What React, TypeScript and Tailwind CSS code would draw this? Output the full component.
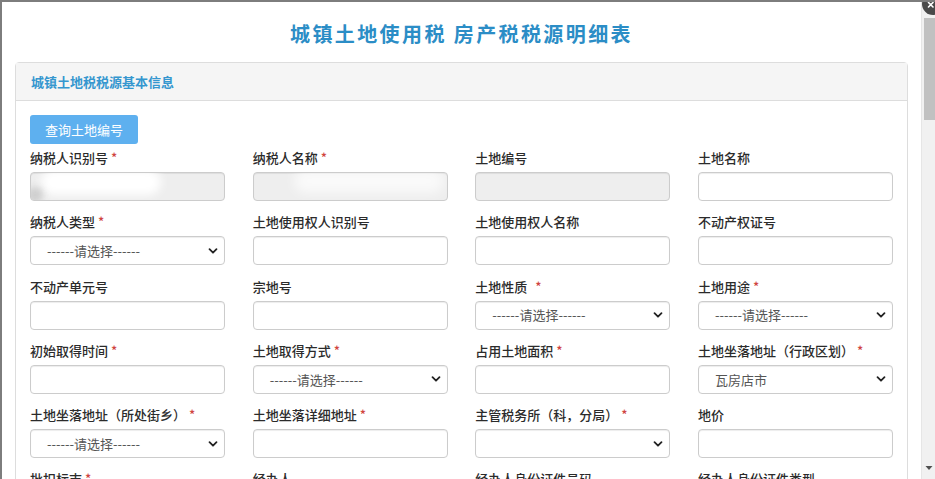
import React from "react";

type Field = {
  label: string;
  star?: boolean;
  starGap?: boolean;
  kind: "input" | "disabled" | "select";
  value?: string;
  blur?: 1 | 2;
};

const rows: Field[] = [
  { label: "纳税人识别号", star: true, kind: "disabled", blur: 1 },
  { label: "纳税人名称", star: true, kind: "disabled", blur: 2 },
  { label: "土地编号", kind: "disabled" },
  { label: "土地名称", kind: "input" },
  { label: "纳税人类型", star: true, kind: "select", value: "------请选择------" },
  { label: "土地使用权人识别号", kind: "input" },
  { label: "土地使用权人名称", kind: "input" },
  { label: "不动产权证号", kind: "input" },
  { label: "不动产单元号", kind: "input" },
  { label: "宗地号", kind: "input" },
  { label: "土地性质", star: true, starGap: true, kind: "select", value: "------请选择------" },
  { label: "土地用途", star: true, kind: "select", value: "------请选择------" },
  { label: "初始取得时间", star: true, kind: "input" },
  { label: "土地取得方式", star: true, kind: "select", value: "------请选择------" },
  { label: "占用土地面积", star: true, kind: "input" },
  { label: "土地坐落地址（行政区划）", star: true, kind: "select", value: "瓦房店市" },
  { label: "土地坐落地址（所处街乡）", star: true, kind: "select", value: "------请选择------" },
  { label: "土地坐落详细地址", star: true, kind: "input" },
  { label: "主管税务所（科，分局）", star: true, kind: "select", value: "" },
  { label: "地价", kind: "input" },
  { label: "批扣标志", star: true, kind: "select", value: "------请选择------" },
  { label: "经办人", kind: "input" },
  { label: "经办人身份证件号码", kind: "input" },
  { label: "经办人身份证件类型", kind: "select", value: "------请选择------" },
];

function Chevron() {
  return (
    <svg
      className="pointer-events-none absolute right-[6px] top-1/2 -translate-y-1/2"
      width="10"
      height="10"
      viewBox="0 0 10 10"
    >
      <path d="M1.5 3.2 L5 6.7 L8.5 3.2" fill="none" stroke="#222" strokeWidth="1.8" strokeLinecap="round" strokeLinejoin="round" />
    </svg>
  );
}

function Control({ f }: { f: Field }) {
  const base =
    "relative h-[29px] w-full rounded-[4px] border border-[#cccccc] shadow-[inset_0_1px_1px_rgba(0,0,0,0.075)] overflow-hidden";
  if (f.kind === "select") {
    return (
      <div className={`${base} bg-white flex items-center pl-[16px] text-[13px] text-[#555]`}>
        <span className="whitespace-nowrap">{f.value}</span>
        <Chevron />
      </div>
    );
  }
  if (f.kind === "disabled") {
    return (
      <div className={`${base} bg-[#eeeeee]`}>
        {f.blur === 1 && (
          <>
            <div className="absolute left-[10px] top-[-4px] h-[26px] w-[120px] rounded-full bg-white blur-[5px]" />
            <div className="absolute left-[-4px] top-[14px] h-[16px] w-[16px] rounded-full bg-[#cfcfcf] blur-[3px]" />
          </>
        )}
        {f.blur === 2 && (
          <div className="absolute left-[40px] top-[-4px] h-[24px] w-[150px] rounded-full bg-white opacity-70 blur-[6px]" />
        )}
      </div>
    );
  }
  return <div className={`${base} bg-white`} />;
}

export default function App() {
  return (
    <div className="relative flex h-[479px] w-[935px] overflow-hidden border-l-2 border-t-2 border-[#7d7d7d] bg-white font-['Noto_Sans_CJK_SC','Microsoft_YaHei',sans-serif] text-[#333]">
      <div className="min-w-0 flex-1">
        <div className="flex h-[60px] items-center justify-center pt-[4px]">
          <h1 className="text-[20px] font-bold leading-[28px] tracking-[2.4px] text-[#2b8dc6]">
            城镇土地使用税 房产税税源明细表
          </h1>
        </div>
        <div className="ml-[13px] w-[893px] rounded-[4px] border border-[#dddddd]">
          <div className="flex h-[38px] items-center border-b border-[#dddddd] bg-[#f5f5f5] pl-[15px] text-[13px] font-bold text-[#3597cf]">
            城镇土地税税源基本信息
          </div>
          <div className="pl-[14px] pt-[14px]">
            <button className="mb-[4px] h-[29px] w-[108px] rounded-[3px] bg-[#5eb0ef] text-[13px] text-white">
              查询土地编号
            </button>
            <div className="grid grid-cols-[repeat(4,195px)] gap-x-[27.67px] gap-y-[11.25px]">
              {rows.map((f, i) => (
                <div key={i} className="flex flex-col">
                  <div className="h-[20px] whitespace-nowrap text-[13px] font-medium leading-[20px] text-[#2b2b2b]">
                    {f.label}
                    {f.star && (
                      <span className={`${f.starGap ? "ml-[8px]" : "ml-[3px]"} text-[#d0453f]`}>*</span>
                    )}
                  </div>
                  <div className="mt-[4px]">
                    <Control f={f} />
                  </div>
                </div>
              ))}
            </div>
          </div>
        </div>
      </div>
      <div className="flex w-[14px] flex-col border-l border-[#e6e6e6] bg-[#f1f1f1]">
        <div className="h-[16px]" />
        <div className="ml-[2px] h-[102px] bg-[#c1c1c1]" />
        <div className="flex-1" />
        <div className="flex h-[15px] items-start justify-center pt-[1px]">
          <svg width="8" height="6" viewBox="0 0 8 6">
            <path d="M0.5 1 L7.5 1 L4 5 Z" fill="#505050" />
          </svg>
        </div>
      </div>
      <div className="absolute right-[-9px] top-[-9px] flex h-[22px] w-[22px] items-center justify-center rounded-full bg-[#4a4a4a]">
        <svg width="22" height="22" viewBox="0 0 22 22">
          <path d="M6.5 9.5 L11 14 M11 9.5 L6.5 14" stroke="white" strokeWidth="1.6" strokeLinecap="round" />
        </svg>
      </div>
    </div>
  );
}
